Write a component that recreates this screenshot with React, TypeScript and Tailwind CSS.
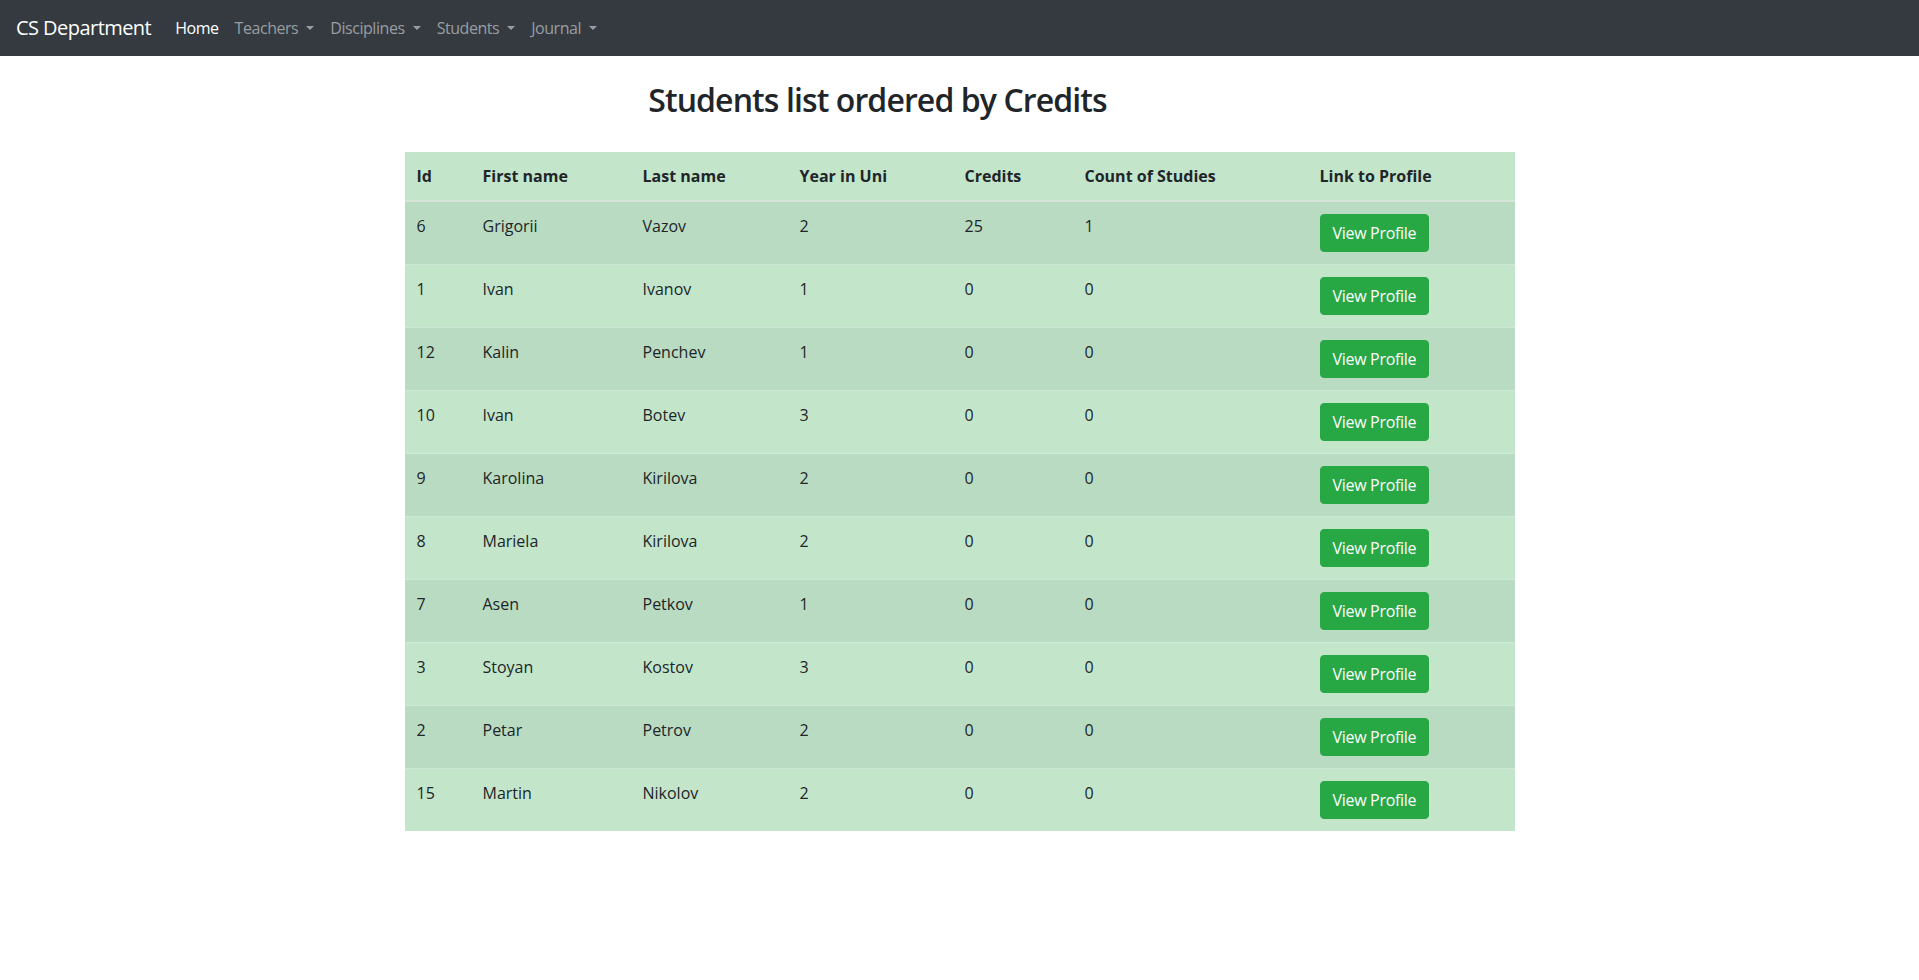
import React from 'react';

type Student = {
  id: number;
  firstName: string;
  lastName: string;
  year: number;
  credits: number;
  studies: number;
};

const students: Student[] = [
  { id: 6, firstName: 'Grigorii', lastName: 'Vazov', year: 2, credits: 25, studies: 1 },
  { id: 1, firstName: 'Ivan', lastName: 'Ivanov', year: 1, credits: 0, studies: 0 },
  { id: 12, firstName: 'Kalin', lastName: 'Penchev', year: 1, credits: 0, studies: 0 },
  { id: 10, firstName: 'Ivan', lastName: 'Botev', year: 3, credits: 0, studies: 0 },
  { id: 9, firstName: 'Karolina', lastName: 'Kirilova', year: 2, credits: 0, studies: 0 },
  { id: 8, firstName: 'Mariela', lastName: 'Kirilova', year: 2, credits: 0, studies: 0 },
  { id: 7, firstName: 'Asen', lastName: 'Petkov', year: 1, credits: 0, studies: 0 },
  { id: 3, firstName: 'Stoyan', lastName: 'Kostov', year: 3, credits: 0, studies: 0 },
  { id: 2, firstName: 'Petar', lastName: 'Petrov', year: 2, credits: 0, studies: 0 },
  { id: 15, firstName: 'Martin', lastName: 'Nikolov', year: 2, credits: 0, studies: 0 },
];

const menus = ['Teachers', 'Disciplines', 'Students', 'Journal'];

function Caret() {
  return (
    <span
      className="ml-[8px] inline-block h-0 w-0 border-x-[4.8px] border-t-[4.8px] border-b-0 border-x-transparent border-t-current align-[4px]"
      aria-hidden="true"
    />
  );
}

function Navbar() {
  return (
    <nav className="flex h-14 items-center bg-[#343a40] px-4">
      <a href="#" className="mr-4 py-[5px] text-[20px] leading-[30px] tracking-[-0.55px] text-white">
        CS Department
      </a>
      <ul className="flex items-center tracking-[-0.45px]">
        <li>
          <a href="#" className="block px-2 py-2 leading-6 text-white">
            Home
          </a>
        </li>
        {menus.map(menu => (
          <li key={menu}>
            <a href="#" className="block px-2 py-2 leading-6 text-[#9a9da0]">
              {menu}
              <Caret />
            </a>
          </li>
        ))}
      </ul>
    </nav>
  );
}

const headers = ['Id', 'First name', 'Last name', 'Year in Uni', 'Credits', 'Count of Studies', 'Link to Profile'];

export default function App() {
  return (
    <div className="min-h-[980px] bg-white font-['Open_Sans',sans-serif] text-[16px] text-[#212529]">
      <Navbar />

      <main className="mx-auto w-[1140px] px-[15px]">
        <div className="pr-[164px] pt-[25px] text-center">
          <h2 className="text-[32px] leading-[38.4px] font-semibold tracking-[-0.9px]">Students list ordered by Credits</h2>
        </div>

        <table className="mt-[33px] w-full table-fixed border-collapse bg-[#c3e6cb]" aria-label="Students ordered by credits">
          <colgroup>
            <col className="w-[66px]" />
            <col className="w-[160px]" />
            <col className="w-[157px]" />
            <col className="w-[165px]" />
            <col className="w-[120px]" />
            <col className="w-[235px]" />
            <col className="w-[207px]" />
          </colgroup>
          <thead>
            <tr>
              {headers.map(h => (
                <th
                  key={h}
                  scope="col"
                  className="border-b-2 border-[#d7e4da] px-3 py-3 text-left font-bold leading-6"
                >
                  {h}
                </th>
              ))}
            </tr>
          </thead>
          <tbody>
            {students.map((s, i) => (
              <tr key={s.id} className={i % 2 === 0 ? 'bg-[#b9dbc1]' : 'bg-[#c3e6cb]'}>
                <td className="border-t border-[#cfe7d5] p-3 align-top leading-6">{s.id}</td>
                <td className="border-t border-[#cfe7d5] p-3 align-top leading-6">{s.firstName}</td>
                <td className="border-t border-[#cfe7d5] p-3 align-top leading-6">{s.lastName}</td>
                <td className="border-t border-[#cfe7d5] p-3 align-top leading-6">{s.year}</td>
                <td className="border-t border-[#cfe7d5] p-3 align-top leading-6">{s.credits}</td>
                <td className="border-t border-[#cfe7d5] p-3 align-top leading-6">{s.studies}</td>
                <td className="border-t border-[#cfe7d5] p-3 align-top leading-6">
                  <button
                    type="button"
                    className="rounded-[4px] border border-[#28a745] bg-[#28a745] px-3 py-[6px] leading-6 tracking-[-0.3px] text-white"
                  >
                    View Profile
                  </button>
                </td>
              </tr>
            ))}
          </tbody>
        </table>
      </main>
    </div>
  );
}
